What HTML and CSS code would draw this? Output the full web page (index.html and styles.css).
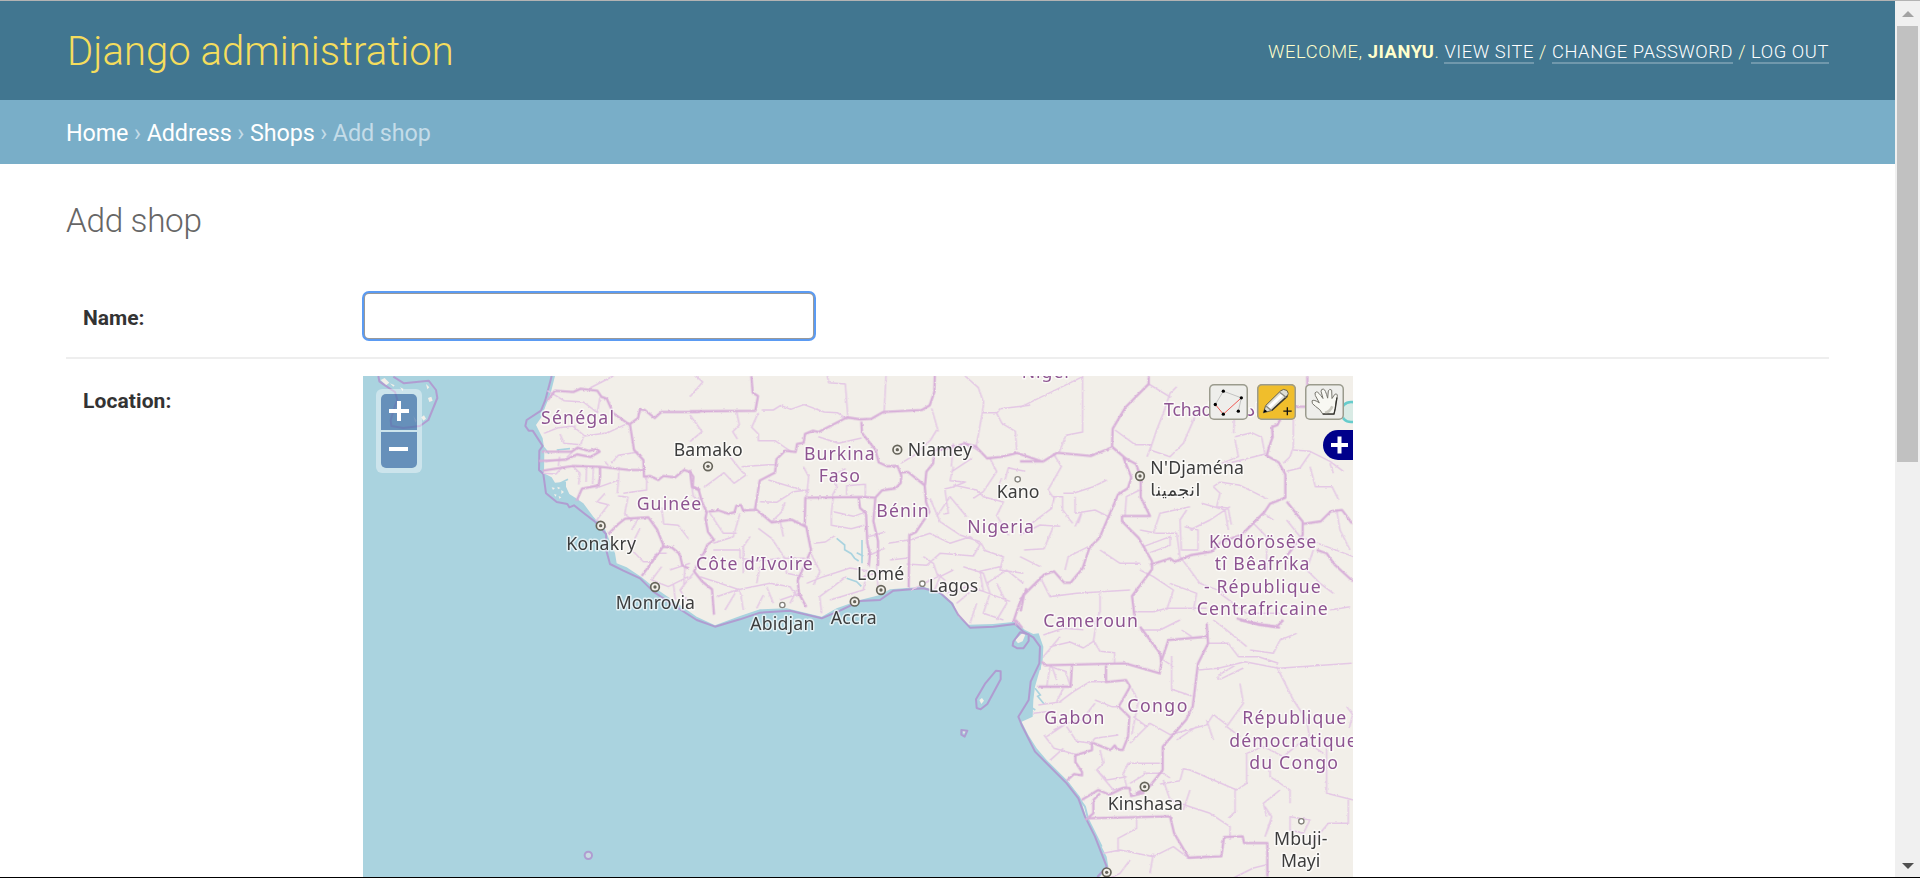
FILE: index.html
```html
<!DOCTYPE html>
<html lang="en">
<head>
<meta charset="utf-8">
<title>Add shop | Django site admin</title>
<link rel="stylesheet" href="styles.css">
</head>
<body>
<div class="window">
<div class="page">
  <header class="header">
    <h1 class="site-name">Django administration</h1>
    <div class="user-tools">Welcome, <strong>jianyu</strong>. <a>View site</a> / <a>Change password</a> / <a>Log out</a></div>
  </header>
  <nav class="breadcrumbs"><a>Home</a> › <a>Address</a> › <a>Shops</a> › Add shop</nav>
  <main class="content">
    <h2 class="title">Add shop</h2>
    <div class="row row-name">
      <label class="label" for="name">Name:</label>
      <input class="text-field" id="name" type="text">
    </div>
    <div class="row row-map">
      <span class="label">Location:</span>
      <div class="map">
        <svg class="tiles" viewBox="9 18 2970 1503">
          <defs>
            <filter id="wiggle" filterUnits="userSpaceOnUse" x="0" y="0" width="2990" height="1540"><feTurbulence type="fractalNoise" baseFrequency=".1" numOctaves="2" seed="4"/><feDisplacementMap in="SourceGraphic" scale="7" xChannelSelector="R" yChannelSelector="G"/></filter>
          </defs>
          <rect x="9" y="18" width="2970" height="1503" fill="#aad3df"/>
          <!-- land -->
          <path fill="#f2efe9" d="M585 18L572 70 556 110 545 140 528 165 548 205 553 240 552 310 575 322 585 338 618 335 618 350 628 372 648 385 670 400 700 440 735 478 748 510 765 550 770 580 800 592 845 622 880 650 920 678 960 705 1010 740 1065 766 1140 738 1200 718 1280 715 1385 740 1430 715 1500 690 1560 675 1590 658 1690 650 1740 665 1780 700 1795 740 1825 764 1900 762 1965 755 1995 780 2020 792 2036 790 2050 830 2048 870 2035 915 2025 950 2020 990 2018 1040 1985 1055 2005 1095 2030 1135 2060 1170 2120 1230 2160 1280 2178 1340 2210 1400 2240 1460 2245 1490 2220 1521H2979V18Z"/>
          <g fill="#f2efe9">
            <path d="M62 30l12-6 14 14-10 8zM90 40l14 6-4 4zM120 52l10 4-2 8zM198 42l10 10-6 6zM204 84l10-4 4 12-10 4zM184 142l8-6 6 10-8 6zM160 138l10 14-4 6z"/>
            <path d="M575 352l10 2-6 6zM592 350l10 4-8 4zM604 360l8 6-8 6zM582 372l8 2-4 6zM596 378l8 4-6 4z"/>
            <path d="M1966 810l22-22 8 6-8 20-14 6zM1858 990l8-6 6 8-8 10zM1808 1084l8 0-4 8z"/>
          </g>
          <!-- lakes and estuaries -->
          <g fill="none" stroke="#aad3df" stroke-width="6">
            <path d="M1430 505l24 20 0 14 20 12 10 14 12 8M1506 510v70M1490 548l20 10M1460 625l30 10 14 14M2025 955l16 20-8 4 20 24M2010 1010l16 10M545 225l22 26M590 240l40-4M600 340l24-12" stroke-width="5"/>
            <path d="M2035 800l10 50-6 50M2065 1180l60 60 50 70 10 40 40 80"/>
          </g>
          <!-- maritime boundary -->
          <g fill="none" stroke="#b193cf" stroke-width="6" stroke-linejoin="round" opacity=".85">
            <path d="M575 18L556 90 543 122 500 150 496 168 506 182 518 182 548 228 538 242 537 300 550 312 558 370 590 396 622 402 628 412 642 406 672 430 706 456 738 492 740 545 750 582 790 602 840 625 880 665 940 705 1010 750 1065 770 1140 748 1200 728 1290 722 1385 745 1440 722 1500 693 1560 690 1600 662 1690 655 1740 668 1775 700 1795 735 1830 773 1900 770 1965 762 1990 785 2020 802 2040 830 2038 880 2012 935 2006 990 1975 1040 1985 1065 2025 1145 2120 1240 2155 1285 2175 1340 2205 1400 2240 1490 2212 1521"/>
            <path d="M55 18L58 34 75 46 105 66 112 90 104 110 92 150 94 168 130 174 180 168 205 150 232 84 228 60 206 32 132 40 100 20"/>
            <path d="M1908 902l14 2 0 24-40 74-20 16-12-4-2-26 28-48zM1804 1080l18 2-8 18-10-6zM1960 815l20-28 26 6 0 20-16 22-18 0-14-8z"/>
            <circle cx="685" cy="1456" r="11" fill="#cfdde2"/>
          </g>
          <!-- regional boundaries -->
          <g class="regional">
            <path d="M562 62L612 92 670 96 712 128 720 82M690 54L760 18M552 190l40-16 46-6 36 30 70-10 64-30M600 192l12 28 50 4 8-24M556 275l60-8 20-20M595 288l4-28M550 310l38 2 20-22M640 290l20 20-4 34M680 290l-2 46M700 292l-2 50M706 355l70-25 0-40M776 320l-4 50M860 320l0 40-70 10M990 310l10 70 20 10M735 275l10 12M735 370l-24 26 34 8-36 48 30 20M774 378l30 4-10 50 24 20M815 480l20-34M905 412l6 50 44 4 30 40M840 475l-30 60 40 40 30 0M870 580l20-30 30 0M905 590l-30 40 50 20 60-30M930 600l60-20M940 640l6 50M975 590l-4 60M1000 610l-40 50 20 30M755 280l20-24 60-10M645 180l0-14"/>
            <g transform="translate(990 0)">
              <path d="M0 80l38-44-20-18M0 135l36 50-36 30M140 125l8 40-20 20 14 22M215 120l35 0 22-14 30 12 40-14 60 22 40 2 30 20M412 18l4 20 50 4 8 105M588 18l-6 115M825 18l40 35 16 45-4 30-20 110M740 180l-18 30-50 46-40 24M725 115l20 70M878 128l44 0 8-12 90-10M920 130l16 30 40 24 4 56M820 215l50 30M790 220l-6 70M205 128l-20 44 20 20 0 20 50 0 50 34M120 260l24 30 22 26-34 24-30-32-60 44M155 290l80-6 20 0M210 395l50 2 50-32 48-6M245 455l30-30 10-28M235 330l120 36M340 290l16 30-6 60M425 380l16-30-14-34 40-20M470 375l0-28 56-4 0 38M385 200l60 20 70-16M430 380l-6 50 0 36 60 10 38-10M430 425l60 14 40-14M372 520l34-4 30-20M360 545l30 60-20 40M350 640l50-20 80-26 60 10M395 730l-6-50 80-60M420 690l100-30 12-60"/>
              <path d="M535 500l50-14M540 555l44-20M595 520l60-10M600 570l54-6M520 620l60-16M560 585l4 70M660 510l60-20 60 30 60-20 30 24-20 34-100-8-40 36-60-4M700 560l30 20 14 40-80 40M720 385l30 70 60 40 60 20 16 26M740 440l40-60 50 60M765 360l10 70-15 2M790 290l-10 42 46 4-40 16-20 4M790 345l70 15 20 20 60 16-20 40 36 60M845 265l-60 40M900 265l20 40-40 60-30 20M945 330l10-36 50 10M935 325l-10 26M820 590l60 20 20 60-20 60 60 20M790 600l-40 20-20 50M880 540l60 20-10 40 70 10M930 590l-60 14 10 60 80 30M770 670l60-20 50 14M800 700l40-34M860 700l-20 60M920 640l30 60-30 50M890 640l60-40 50 40M770 670l-6-40-24-20"/>
              <path d="M60 430l40 60 40 0M70 520l60-20 20-70M70 540l80 0 0 24M205 475l40 30 40 60 60 0M280 500l-10-50M180 500l-20 30 0 80M30 620l60 20 60 20 10 60M80 680l60-20 100-20 60 10 20 30M200 640l10-50M250 700l-20-50M270 690l60-20M200 715l20-40M300 700l20-40M105 720l30-50M150 564l60 10 60-10M280 560l10 50 50 10"/>
            </g>
            <g transform="translate(1980 0)">
              <path d="M0 112L188 20M188 18l0 168-50 10-20 50M386 42l66 40M525 140l-35 80-40 40-60-20 20-60 20-50 20-60 20-20M285 180l60 44 50 0-14 36M645 80l-4 110M645 200l50-12 30 14 10 50-80 20-40 10M645 210l10 50-50 20M820 110l0 120-10 30-20 20M820 240l50 4 60 30 40 30M870 250l-30 44-40 10M870 290l16 60 50 0 20 40M940 310l-10-30M580 350l20-14 60 10 80 40M580 350l20 20-10 40 34 4 10 50M100 250l24 40-40 70 14 20 30 0 0 40 30 40M130 370l30 0 60-20 40-20M165 380l0 50 60-10 40 20M165 470l18-40M185 430l-10 30M205 530l-60 30-10 40M105 375l-10 40-80 60M0 495l60-30 60 4M12 540l60-4 30-70M0 560l60 30M60 620l30 60 80-10 160-10M240 540l60 40 60 0M240 670l0 56-20 40M360 480l50 10 60 0 10 70M370 530l80-30 0 26-60 22M400 490l20-60 90-20M500 420l-20 30 4 90 50 0 0-60-40-10M510 480l60-30 60-40M545 400l70 20 10 60M315 440l4-60 40-20M360 600l40 20 60 40-20 60M340 725l60 0 40-10 120 0M450 640l80 30-10 50M480 560l60 80 80 30M600 670l80 60 100 0M700 460l40 40 0 100M880 540l-20 60 40 40 40 30M930 720l60-10M800 450l40 50 160 60M990 540l-30-60-10-60M760 450l-30-20"/>
            </g>
            <g transform="translate(1620 750)">
              <path d="M430 45l60-20 60 4M450 80l60-14 40 18 30-20 10-60M580 60l20 34 44 4 0 34M430 110l50-60M440 200l10-60 46 14 14 40M470 180l-16-46M490 205l-20 40M480 245l40-30 50-30 46 0M415 255l70-10M400 280l50-6M585 240l50 20 20 0M585 250l-40 50-44 10-40 20M500 320l30 44 44 6M440 350l60-40M432 345l30 40 70 20M490 385l-40 36M600 390l10 40-20 20 30 30 60-10M590 450l50 60 40-10-10-40 14-30 96 0M655 345l-70 10-14 16M740 320l-40-30M690 370l60-60 60 34 110-30 20-30 40 30M695 345l20-100-20-40M830 360l60-40M815 108l0 100 60 20M790 120l30 20M720 30l60 0 60-30M845 30l30 20M895 150l60-5 80-20 100 20 220-15M960 178l70-34M955 180l0-14 50-30M1040 80l-60-50-40-30M1050 90l70 10 20-40 50-20M925 70l60 0 30 40 60 0 60 20M1130 140l30 60 20 40 40 60 10 60M1020 190l10 60-50 70 40 30M940 360l-20-60M1040 400l0 90-30 20-140-60-20-4-10 36-60 10M1040 400l50-20 60 30 60-50 60 40M790 480l20 60 60 20 60 20 60 40 0 40M870 510l-20 60M1005 505l0 70-20 20M1110 410l0 60 60 40 0 40M1280 380l0 140 80 20M1345 540l0 70-60 0-50 60M1095 560l20 30-20 60M1170 590l60 10-20 40-40-10zM730 460l60 0 20 14M690 490l50-30M710 595l0 30-56 30 0 40M610 700l50-10 100 20 60-30 40 30M760 700l-10 60M690 720l-30 40-30 14M860 715l60-6M1000 774l60-30 40-10M990 650l0-30M1095 650l20-50M1140 510l-50 40 10 40M1340 260l18 24-10 40"/>
            </g>
          </g>
          <!-- national boundaries -->
          <g class="national">
            <path d="M562 92L585 62 640 66 662 56 712 62 724 80 740 86 760 130 810 165 822 240 850 270 852 320 870 318 895 330 910 318 945 322 972 300 990 306 1000 320 998 350 1020 360M810 162l24-18 6-26 14 2 30 24 20-18 116 0M545 245l90 0 18-12 34 10 24-6 8 8-28 16-40-8-34 16-80 4M548 302l90-14 80 2 90 10 44 0M720 292l0 30-4 24-50 10-16 36M745 492l30-30 20-16 70-4 26 36 20 50-66 90M905 530l30 2 24 20 8 34 20 10"/>
            <g transform="translate(990 0)">
              <path d="M184 18l4 50 16 10-8 44-196 2M0 300l6 50 20 10 10 36 14 30-4 20 8 40 18 24-20 14-10 24-20 36-10 20 24 30 30 24 6 76M55 425l30-4 30 10 18-4 6-20 14-2 6 16 40-2 46 38 60-8 44 22 14 70-40 90 4 40 22 40M195 418l14-86 46-24 4-40 26-26 32 4 4-24 20-4 4-26 24-10 16 4 86-44 40 6 34-2 34-20 116-6 24-14 14-40 2-70M344 465l2-82 170-2 44 2M506 384l4 30 18 16 4 90 8 30-4 40M514 155l2 34 40 50 10 38 26 12 30-2 12 30-2 22-16 16-40 6-20 22-6 70 14 60 0 74M632 308l22-2 50 40 4 50 10 30-40 60-20 10-2 158M705 345l4-40 20-24 4-40 60-10 30-10 34 8 34 36 40-4 50-12 70 24M970 755l20-60 20-40M977 750l20 24"/>
            </g>
            <g transform="translate(1980 0)">
              <path d="M386 18l0 24-70 70-38 64-2 56-64 26-100-10-42 26-70 0M278 232l40 34 30 16 14 40 0 60 28 56-84 0 0 16 50 50 40 70 0 24-60 80 10 80M310 262l24 60-10 32-30 20-56 130-30 30-20 60-36 44-20 0-30-34-30 10-40 40-20 20-10 50M390 585l60-20 14 10 50-20 60-10 30-30 60-20 70-70 16-24 46-18 0-30 0-40-20-36-36-20 8-30 10-26-2-30 16-6 20-40M862 18l0 92-50 0M800 395l48 60 0 40-46 60M848 462l54-8 30-30 34-4 30 40M890 540l30 10 24 34 55 50M650 745l70 20 60 8"/>
            </g>
            <g transform="translate(1620 750)">
              <path d="M345 0l4 16M425 124l10 12 240-6 104 30 6-40 20-60 114-10M720 20l60 80 4 30M920 10l4 60-30 60-16 130-20 40-70 80 0 70-40 50-40 20M412 200l100 0 4-68M618 136l0 50 60-6 12 20-34 60 32 30-4 60-16 40-16-2-8-12-12 14-50-20-6 0 0 20-50 16 0 20 20 30 0 10-24-4-22 20M545 540l50-30 34 14 40-20 20 0 4 24 40-10M600 520l-20 20 0 40-24 20M560 595l250-6 12 50 44 74 98-4 8-58 56-2 4 20 70 0 0 100M1020 0l40 10 70 10 20-20"/>
            </g>
          </g>
          <!-- capitals -->
          <g fill="#f2efe9" stroke="#66645a" stroke-width="5">
            <circle cx="722" cy="467" r="13"/><circle cx="885" cy="651" r="13"/><circle cx="1044" cy="289" r="13"/><circle cx="1612" cy="239" r="13"/><circle cx="1563" cy="660" r="13"/><circle cx="1484" cy="695" r="13"/><circle cx="2340" cy="318" r="13"/><circle cx="2354" cy="1250" r="13"/><circle cx="2240" cy="1507" r="13"/>
          </g>
          <g fill="#66645a">
            <circle cx="722" cy="467" r="5"/><circle cx="885" cy="651" r="5"/><circle cx="1044" cy="289" r="5"/><circle cx="1612" cy="239" r="5"/><circle cx="1563" cy="660" r="5"/><circle cx="1484" cy="695" r="5"/><circle cx="2340" cy="318" r="5"/><circle cx="2354" cy="1250" r="5"/><circle cx="2240" cy="1507" r="5"/>
          </g>
          <g fill="#fff" stroke="#85837c" stroke-width="4">
            <circle cx="1267" cy="705" r="8"/><circle cx="1687" cy="641" r="8"/><circle cx="1973" cy="328" r="8"/><circle cx="2824" cy="1354" r="8"/>
          </g>
          <g class="country">
            <text x="543" y="161" textLength="219">Sénégal</text>
            <text x="830" y="421" textLength="194">Guinée</text>
            <text x="1332" y="269" textLength="212">Burkina</text>
            <text x="1376" y="336" textLength="124">Faso</text>
            <text x="1549" y="440" textLength="157">Bénin</text>
            <text x="1822" y="488" textLength="200">Nigeria</text>
            <text x="1008" y="601" textLength="350">Côte d’Ivoire</text>
            <text x="1985" y="24" textLength="150">Niger</text>
            <text x="2412" y="137" textLength="145">Tchad</text>
            <text x="2662" y="137">تشاد</text>
            <text x="2547" y="535" textLength="322">Ködörösêse</text>
            <text x="2564" y="601" textLength="284">tî Bêafrîka</text>
            <text x="2532" y="668" textLength="350">- République</text>
            <text x="2510" y="734" textLength="393">Centrafricaine</text>
            <text x="2050" y="772" textLength="284">Cameroun</text>
            <text x="2302" y="1025" textLength="180">Congo</text>
            <text x="2053" y="1061" textLength="180">Gabon</text>
            <text x="2647" y="1063" textLength="312">République</text>
            <text x="2608" y="1130" textLength="382">démocratique</text>
            <text x="2668" y="1197" textLength="266">du Congo</text>
          </g>
          <g class="city">
            <text x="619" y="541" textLength="209">Konakry</text>
            <text x="767" y="718" textLength="238">Monrovia</text>
            <text x="941" y="259" textLength="207">Bamako</text>
            <text x="1643" y="259" textLength="193">Niamey</text>
            <text x="1910" y="384" textLength="128">Kano</text>
            <text x="1491" y="631" textLength="142">Lomé</text>
            <text x="1706" y="666" textLength="149">Lagos</text>
            <text x="1171" y="781" textLength="192">Abidjan</text>
            <text x="1412" y="763" textLength="138">Accra</text>
            <text x="2371" y="313" textLength="281">N'Djaména</text>
            <text x="2371" y="379" textLength="150">انجمينا</text>
            <text x="2243" y="1320" textLength="226">Kinshasa</text>
            <text x="2742" y="1425" textLength="160">Mbuji-</text>
            <text x="2763" y="1490" textLength="118">Mayi</text>
          </g>
          <circle cx="2973" cy="126" r="30" fill="#d9ebe5" stroke="#66cccc" stroke-width="8"/>
        </svg>
        <div class="zoom">
          <button class="zoom-btn zoom-in"><svg viewBox="0 0 36 36"><path d="M8 17h20M18 7v20"/></svg></button>
          <button class="zoom-btn zoom-out"><svg viewBox="0 0 36 36"><path d="M8 17h19"/></svg></button>
        </div>
        <div class="tools">
          <button class="tool">
            <svg viewBox="0 0 117 107"><path d="M19 61L43 21 97 41 88 81" fill="none" stroke="#aaa" stroke-width="2"/><path d="M19 61L43 90 97 41" fill="none" stroke="#ee5a55" stroke-width="3"/><g fill="#000"><circle cx="43" cy="21" r="5"/><circle cx="19" cy="61" r="5"/><circle cx="43" cy="90" r="5"/><circle cx="97" cy="41" r="5"/><circle cx="88" cy="81" r="5"/></g></svg>
          </button>
          <button class="tool tool-active">
            <svg viewBox="0 0 117 107"><path d="M19 86L26 64 71 20Q79 12 90 19 97 28 91 36L44 79Z" fill="#deded4" stroke="#66604a" stroke-width="3" stroke-linejoin="round"/><path d="M33 66L73 27 80 34 40 73Z" fill="#fff"/><path d="M44 79L91 36" stroke="#3a382f" stroke-width="5"/><path d="M68 24L88 40M26 65L43 79" fill="none" stroke="#8b8a80" stroke-width="4"/><path d="M19 86l4-11 8 7z"/><path d="M79 81h25M91 69v24" stroke="#111" stroke-width="4"/></svg>
          </button>
          <button class="tool">
            <svg viewBox="0 0 117 107"><path d="M53 89Q46 75 32 67 18 58 21 50 27 45 43 56L31 34Q27 24 35 23 40 23 54 43L48 21Q49 13 56 15 61 16 68 42L70 20Q74 12 80 18L81 43 89 31Q97 26 97 36 91 54 91 72L87 89Z" fill="#f8f8f3" stroke="#77766e" stroke-width="3" stroke-linejoin="round"/><path d="M60 86Q76 82 82 66" fill="none" stroke="#cbcac1" stroke-width="8"/><path d="M53 90H87L91 72 96 40" fill="none" stroke="#33322e" stroke-width="4"/></svg>
          </button>
        </div>
        <button class="layers"><svg viewBox="0 0 30 30"><path d="M8 15h17M16.500 6.500v17"/></svg></button>
      </div>
    </div>
  </main>
</div>
<div class="scrollbar"><i class="arrow-up"></i><div class="thumb"></div><i class="arrow-down"></i></div>
</div>
</body>
</html>
```
FILE: styles.css
```css
* { box-sizing: border-box; }
body { margin: 0; background: #fff; color: #333; font-family: Roboto, "Liberation Sans", sans-serif; }
.window { display: flex; height: 878px; overflow: hidden; border-top: 1px solid #b3b3b3; border-bottom: 1px solid #000; }
.page { flex: 1; min-width: 0; overflow: hidden; }
.header { height: 99px; padding: 0 66px; display: flex; align-items: center; justify-content: space-between; background: #417690; color: #ffc; }
.site-name { margin: 0 0 0 1px; padding-top: 2px; font-size: 40px; font-weight: 300; color: #f5dd5d; white-space: nowrap; letter-spacing: .04px; }
.user-tools { font-size: 18.333px; font-weight: 300; letter-spacing: .57px; text-transform: uppercase; white-space: nowrap; padding-top: 2px; }
.user-tools strong { font-weight: 700; }
.user-tools a { color: #fff; border-bottom: 2px solid rgba(255,255,255,.25); }
.breadcrumbs { height: 64px; padding: 2px 66px 0; font-size: 23.333px; line-height: 62px; letter-spacing: -.1px; background: #79aec8; color: #c4dce8; white-space: pre; }
.breadcrumbs a { color: #fff; }
.content { padding: 33px 66px 0; }
.title { margin: 0; height: 95px; padding-top: 4px; font-size: 33.333px; line-height: 40px; font-weight: 300; letter-spacing: -.35px; color: #666; }
.row { display: flex; padding-left: 16px; }
.row-name { height: 67px; border-bottom: 2px solid #eee; }
.label { width: 281px; flex: none; padding-left: 1px; font-size: 21px; line-height: 25px; font-weight: 700; color: #333; }
.row-name .label { padding-top: 14px; }
.row-map { padding-top: 17px; }
.row-map .label { padding-top: 13px; letter-spacing: .1px; }
.text-field { width: 452px; height: 48px; margin: 0; border: 2px solid #999; border-radius: 6px; outline: 2px solid #5b9bf3; outline-offset: -1px; background: #fff; font: inherit; }
.map { position: relative; width: 990px; height: 600px; overflow: hidden; background: #aad3df; }
.tiles { display: block; width: 990px; height: 501px; }
.regional, .national { fill: none; stroke-linejoin: round; filter: url(#wiggle); }
.regional { stroke: #e4c8e5; stroke-width: 4.5px; }
.national { stroke: #d8b0d9; stroke-width: 7px; }
.country, .city { font-family: "Noto Sans", "DejaVu Sans", sans-serif; font-size: 53px; paint-order: stroke; stroke: rgba(255,255,255,.65); stroke-width: 9px; stroke-linejoin: round; }
.country { fill: #8d5391; }
.city { fill: #3c3c3c; }
.zoom { position: absolute; left: 13px; top: 13px; width: 46px; height: 84px; padding: 5px; display: grid; gap: 2px; background: rgba(255,255,255,.4); border-radius: 6px; }
button { display: block; margin: 0; padding: 0; border: 0; }
button svg { display: block; width: 100%; height: 100%; }
.zoom-btn { width: 36px; height: 36px; background: rgba(0,60,136,.5); }
.zoom-in { border-radius: 5px 5px 0 0; }
.zoom-out { border-radius: 0 0 5px 5px; }
.zoom-btn path, .layers path { fill: none; stroke: #fff; stroke-width: 4; }
.tools { position: absolute; left: 846px; top: 8px; display: flex; gap: 9px; }
.tool { width: 39px; height: 36px; border-radius: 5px; background: #eeeeeb; box-shadow: inset 0 0 0 1.500px #9b9b8d; }
.tool-active { background: #f0be2c; }
.layers { position: absolute; right: 0; top: 54px; width: 30px; height: 30px; background: #00008b; border-radius: 15px 0 0 15px; }
.scrollbar { width: 25px; padding: 10px 2px 8px; display: flex; flex-direction: column; align-items: center; background: #f0f0f0; }
.thumb { width: 21px; height: 436px; margin: 9px 0 auto; background: #c1c1c1; }
.arrow-up { border: 6px solid transparent; border-top: 0; border-bottom-color: #a3a3a3; }
.arrow-down { border: 6px solid transparent; border-bottom: 0; border-top-color: #505050; }
```
